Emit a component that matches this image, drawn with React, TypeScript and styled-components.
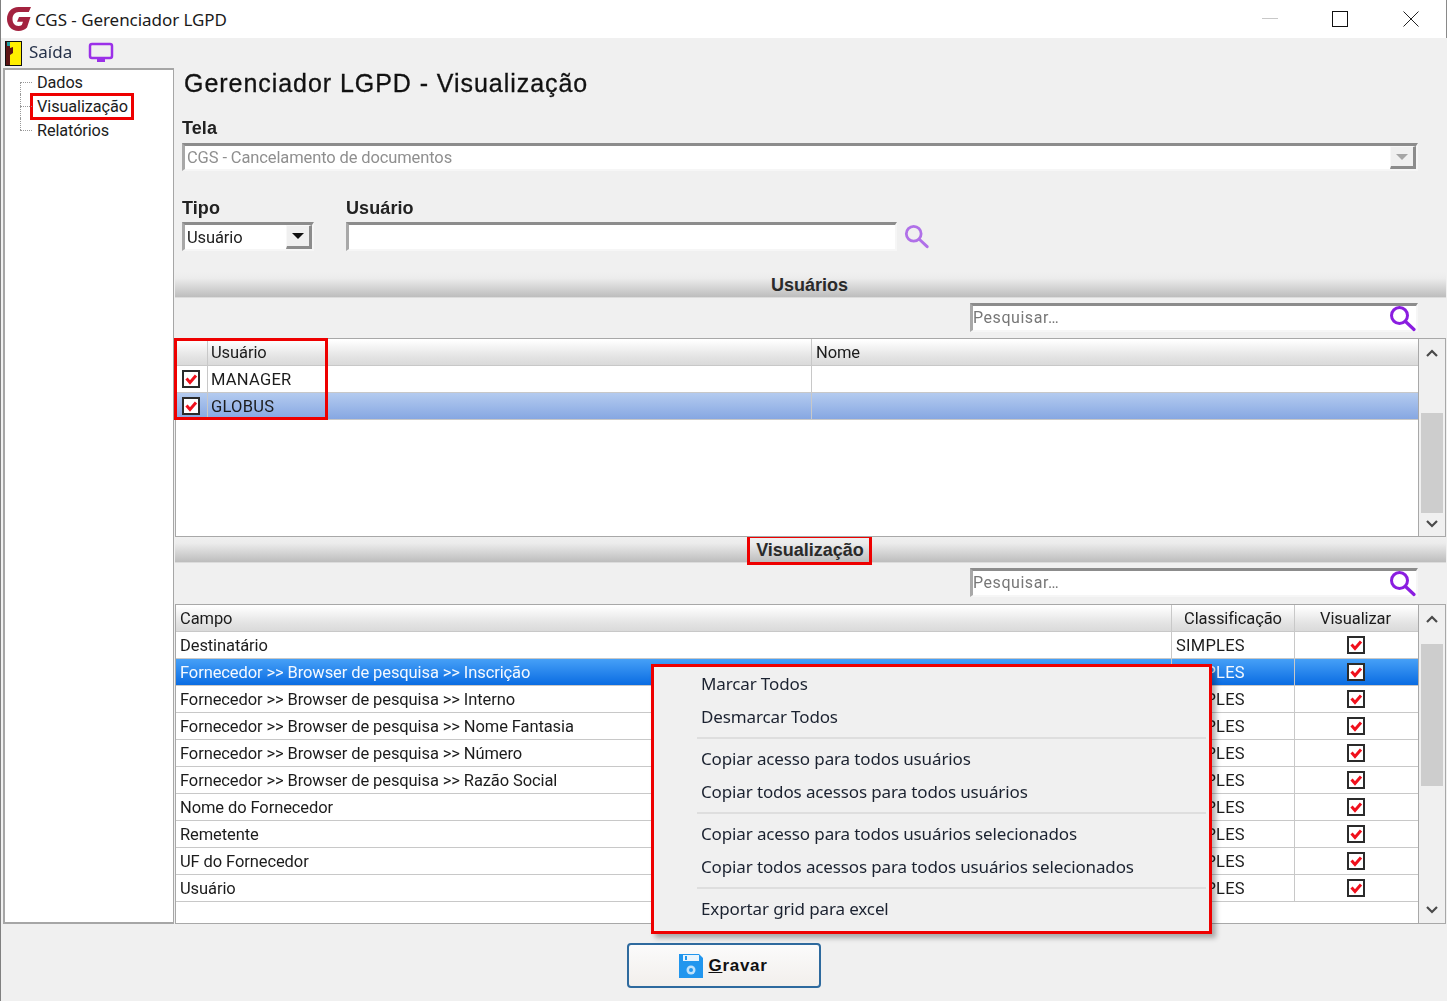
import React from "react";
import styled, { createGlobalStyle, css } from "styled-components";

const Global = createGlobalStyle`
  html, body { margin: 0; padding: 0; background: #f0f0f0; }
  body { font-family: Roboto, "Liberation Sans", sans-serif; color: #111; }
  * { box-sizing: border-box; }
`;

const soft = css`filter: blur(.3px);`;

const Page = styled.div`
  position: relative; width: 1447px; height: 1001px; overflow: hidden;
  display: flex; flex-direction: column; background: #f0f0f0; border-left: 1px solid #808080;
`;
const TitleBar = styled.div`
  height: 38px; background: #fff; display: flex; align-items: center;
  padding-left: 5px; border-right: 1px solid #8a8a8a;
`;
const TitleText = styled.span`
  font-family: "Noto Sans", sans-serif; font-size: 17px; margin-left: 3px; color: #1a1a1a; flex: 1; letter-spacing: -.05px;
`;
const WinButton = styled.span`
  width: 70.5px; height: 38px; display: flex; align-items: center; justify-content: center;
`;
const Toolbar = styled.div`
  height: 30px; display: flex; align-items: center; padding-left: 4px;
`;
const ToolText = styled.span`
  font-family: "Noto Sans", sans-serif; font-size: 17px; color: #26324a; margin: 0 16px 3px 7px; ${soft}
`;
const Body = styled.div`
  display: flex; height: 856px;
`;
const Sidebar = styled.div`
  width: 171px; margin-left: 2px; flex: none; background: #fff;
  border: 2px solid #a6a6a6; border-right-width: 1px; border-bottom-width: 2px;
`;
const TreeRow = styled.div`
  display: flex; height: 24px; margin-left: 15px; align-items: center;
`;
const Guide = styled.span<{ $first?: boolean; $last?: boolean }>`
  position: relative; width: 12px; height: 24px; flex: none;
  &::before {
    content: ""; position: absolute; left: 0; width: 0; border-left: 1px dotted #999;
    top: ${p => (p.$first ? "12px" : "0")}; bottom: ${p => (p.$last ? "12px" : "0")};
  }
  &::after {
    content: ""; position: absolute; left: 0; right: 0; top: 12px; border-top: 1px dotted #999;
  }
`;
const TreeLabel = styled.span<{ $marked?: boolean }>`
  font-size: 16.3px; letter-spacing: -.1px; line-height: 21px; color: #1c1c1c; padding: 0 3px 0 4px; margin-left: 1px;
  ${p => p.$marked ? "outline: 3px solid #ee0000;" : ""}
`;
const Main = styled.div`
  margin-left: 1px; width: 1271px; flex: none; display: flex; flex-direction: column;
`;
const Form = styled.div`
  padding-left: 7px; display: flex; flex-direction: column;
`;
const Heading = styled.h1`
  margin: 0 0 0 2px; height: 30px; font-size: 25px; line-height: 30px; font-weight: 400; color: #111; letter-spacing: .95px;
  font-family: "Liberation Sans", sans-serif; -webkit-text-stroke: .3px #111; ${soft}
`;
const FieldLabel = styled.div`
  font-family: "Liberation Sans", sans-serif; font-size: 18px; line-height: 22px; font-weight: 700; color: #222; height: 20px; letter-spacing: .1px; ${soft}
`;
const Recessed = styled.div<{ $w: number; $h: number }>`
  width: ${p => p.$w}px; height: ${p => p.$h}px; background: #fff; display: flex; align-items: center;
  border-style: solid; border-width: 3px 2px 2px 3px; border-color: #8c8c8c #f6f6f6 #f6f6f6 #a8a8a8;
`;
const ComboText = styled.span<{ $muted?: boolean }>`
  flex: 1; font-size: 16.5px; letter-spacing: -.12px; padding: 0 0 ${p => (p.$muted ? 1 : 0)}px 2px; color: ${p => (p.$muted ? "#8f8f8f" : "#222")}; ${soft}
`;
const DropButton = styled.span<{ $disabled?: boolean }>`
  width: 26px; align-self: stretch; display: flex; align-items: center; justify-content: center; background: #f0f0f0;
  border-style: solid; border-width: 1px 3px 3px 1px; border-color: #f8f8f8 #8c8c8c #8c8c8c #f8f8f8;
  &::after {
    content: ""; border-style: solid; border-width: 6px 6px 0 6px;
    border-color: ${p => (p.$disabled ? "#a6a6a6" : "#111")} transparent transparent transparent;
  }
`;
const TelaGroup = styled.div`
  margin-top: 19px; display: flex; flex-direction: column; gap: 6px;
`;
const FilterRow = styled.div`
  margin-top: 26px; margin-bottom: 21px; display: flex; gap: 32px;
`;
const FilterField = styled.div`
  display: flex; flex-direction: column; gap: 5px;
`;
const InputWrap = styled.div`
  display: flex; align-items: center; gap: 7px;
`;
const SectionBar = styled.div`
  height: 26px; flex: none; display: flex; align-items: center; justify-content: center;
  background: linear-gradient(#f0f0f0 0%, #ececec 25%, #bdbdbd 100%);
  border-bottom: 1px solid #dcdcdc; padding-right: 2px;
`;
const SectionTitle = styled.span<{ $marked?: boolean }>`
  font-family: "Liberation Sans", sans-serif; font-size: 18px; font-weight: 700; color: #2a2a2a; line-height: 24px;
  ${p => p.$marked ? "outline: 3px solid #ee0000; padding: 0 5px 0 6px;" : ""}
`;
const SearchRow = styled.div<{ $top: number; $bottom: number }>`
  display: flex; justify-content: flex-end; padding-right: 28px;
  margin-top: ${p => p.$top}px; margin-bottom: ${p => p.$bottom}px;
`;
const SearchHint = styled.span`
  flex: 1; font-size: 16px; color: #777; letter-spacing: .55px; padding-bottom: 2px; ${soft}
`;
const GridBox = styled.div<{ $h: number }>`
  position: relative; height: ${p => p.$h}px; width: 1271px; display: flex; flex: none;
  border: 1px solid #a8a8a8; background: #fff;
`;
const GridBody = styled.div`
  flex: 1; min-width: 0;
`;
const Row = styled.div<{ $cols: string; $tone?: "soft" | "strong" | "head" }>`
  display: grid; grid-template-columns: ${p => p.$cols}; height: 27px;
  border-bottom: 1px solid #c8c8c8;
  background: ${p => p.$tone === "soft" ? "linear-gradient(#b4cbef,#86a7e2)"
    : p.$tone === "strong" ? "linear-gradient(#46a0f7,#0a6ce2)"
    : p.$tone === "head" ? "linear-gradient(#ffffff 5%,#e3e3e3 70%,#dadada)" : "#fff"};
  color: ${p => (p.$tone === "strong" ? "#f4f9ff" : "#1c1c1c")};
`;
const Cell = styled.div<{ $center?: boolean; $pad?: number }>`
  display: flex; align-items: center; overflow: hidden; white-space: nowrap;
  justify-content: ${p => (p.$center ? "center" : "flex-start")};
  padding: 0 ${p => (p.$center ? 2 : 0)}px 0 ${p => p.$pad ?? 4}px; font-size: 16.5px; letter-spacing: -.1px;
  border-right: 1px solid #c8c8c8;
  &:last-child { border-right: 0; }
  ${soft}
`;
const Mono = styled.span`
  letter-spacing: .25px; font-size: 16.5px;
`;
const Scroll = styled.div`
  width: 27px; flex: none; background: #f0f0f0; border-left: 1px solid #a8a8a8; display: flex; flex-direction: column; align-items: center;
`;
const ScrollBtn = styled.div<{ $lift?: number }>`
  height: 27px; width: 100%; flex: none; display: flex; align-items: center; justify-content: center;
  padding-bottom: ${p => p.$lift ?? 0}px;
`;
const ScrollTrack = styled.div<{ $before: number; $size: number }>`
  flex: 1; width: 100%; padding: ${p => p.$before}px 2px 0 2px;
  &::before { content: ""; display: block; height: ${p => p.$size}px; background: #cdcdcd; }
`;
const RedFrame = styled.div`
  position: absolute; left: -2px; top: -1px; width: 154px; height: 82px; border: 3px solid #ee0000; pointer-events: none;
`;
const Footer = styled.div`
  flex: 1; display: flex; justify-content: center; padding: 19px 1px 0 0;
`;
const SaveButton = styled.button`
  width: 194px; height: 45px; border: 2px solid #2e6a9e; border-radius: 4px; display: flex; align-items: center; justify-content: center; gap: 5px;
  background: linear-gradient(#fbfbfb,#f2efec); font-family: "Liberation Sans", sans-serif; font-weight: 700; font-size: 17px; color: #111; letter-spacing: .7px; padding: 0;
`;
const Under = styled.span`
  text-decoration: underline;
`;
const Menu = styled.div`
  position: absolute; left: 650px; top: 664px; width: 561px; height: 270px; background: #f0f0f0;
  border: 3px solid #ee0000; box-shadow: 4px 4px 5px rgba(0,0,0,.3);
`;
const MenuItem = styled.div`
  height: 33px; display: flex; align-items: center; padding: 0 0 1px 47px;
  font-family: "Noto Sans", sans-serif; font-size: 17px; letter-spacing: -.13px; color: #1b2230; ${soft}
`;
const MenuSep = styled.div`
  height: 9px; margin-left: 43px; margin-right: 3px; display: flex; align-items: center;
  &::after { content: ""; flex: 1; height: 2px; background: #dedede; }
`;

const Logo = () => (
  <svg width="26" height="26" viewBox="0 0 26 26">
    <path d="M25 1H12.500C5.500 1 1 6.500 1 13s4.500 12 11.500 12c3.500 0 6.500-1.200 8.500-3.500L24.500 11H13l-2 4.800h6l-1.200 3.200c-.9.7-2 1-3.300 1-3.800 0-6-3-6-7s2.500-7 6.300-7h10z" fill="#a3223f" />
  </svg>
);
const Door = () => (
  <svg width="17" height="25" viewBox="0 0 17 25">
    <rect x="0.500" y="0.500" width="16" height="24" fill="#ffef00" stroke="#111" />
    <path d="M1 1h4v23H1z" fill="#5c1414" />
    <path d="M5 7l3-1v6l-3 2z" fill="#5c1414" />
    <rect x="2" y="1" width="3" height="4" fill="#20a0a0" />
  </svg>
);
const Monitor = () => (
  <svg width="26" height="22" viewBox="0 0 26 22">
    <rect x="2" y="2" width="22" height="14" rx="2" fill="none" stroke="#9b30e8" strokeWidth="2.500" />
    <rect x="9" y="17" width="8" height="3" fill="#9b30e8" />
  </svg>
);
const Lens = ({ size = 27, color = "#8a1de0" }: { size?: number; color?: string }) => (
  <svg width={size} height={size} viewBox="0 0 27 27">
    <circle cx="10.500" cy="10.500" r="8" fill="none" stroke={color} strokeWidth="3" />
    <path d="M16.500 16.500L25 24.500" stroke={color} strokeWidth="3.200" strokeLinecap="round" />
  </svg>
);
const Check = () => (
  <svg width="18" height="18" viewBox="0 0 18 18">
    <rect x="1" y="1" width="16" height="16" fill="#fff" stroke="#2b2b2b" strokeWidth="2" />
    <path d="M4.500 8.500L8 12.500L14 5.500" fill="none" stroke="#f0101c" strokeWidth="3" />
  </svg>
);
const Chevron = ({ up }: { up?: boolean }) => (
  <svg width="12" height="8" viewBox="0 0 12 8">
    <path d={up ? "M1 7L6 2L11 7" : "M1 1L6 6L11 1"} fill="none" stroke="#4a4a4a" strokeWidth="2.200" />
  </svg>
);
const Floppy = () => (
  <svg width="24" height="25" viewBox="0 0 24 25">
    <path d="M0 1h20l4 4v20H0z" fill="#2196ee" />
    <rect x="4" y="2" width="16" height="6" fill="#e8f4fd" />
    <rect x="6" y="3" width="2" height="4" fill="#2196ee" />
    <circle cx="12" cy="17" r="4.500" fill="#bfe2fb" />
    <circle cx="12" cy="17" r="2" fill="#2196ee" />
  </svg>
);

const usersCols = "32px 604px 1fr";
const fieldCols = "996px 123px 1fr";
const fields = [
  "Destinatário",
  "Fornecedor >> Browser de pesquisa >> Inscrição",
  "Fornecedor >> Browser de pesquisa >> Interno",
  "Fornecedor >> Browser de pesquisa >> Nome Fantasia",
  "Fornecedor >> Browser de pesquisa >> Número",
  "Fornecedor >> Browser de pesquisa >> Razão Social",
  "Nome do Fornecedor",
  "Remetente",
  "UF do Fornecedor",
  "Usuário",
];
const menu = [
  ["Marcar Todos", "Desmarcar Todos"],
  ["Copiar acesso para todos usuários", "Copiar todos acessos para todos usuários"],
  ["Copiar acesso para todos usuários selecionados", "Copiar todos acessos para todos usuários selecionados"],
  ["Exportar grid para excel"],
];

const Search = () => (
  <Recessed $w={448} $h={29}>
    <SearchHint>Pesquisar…</SearchHint>
    <Lens />
  </Recessed>
);

export default function App() {
  return (
    <Page>
      <Global />
      <TitleBar>
        <Logo />
        <TitleText>CGS - Gerenciador LGPD</TitleText>
        <WinButton><svg width="16" height="2"><rect width="16" height="1" fill="#c8c8c8" /></svg></WinButton>
        <WinButton><svg width="16" height="16"><rect x=".5" y=".5" width="15" height="15" fill="none" stroke="#111" /></svg></WinButton>
        <WinButton><svg width="16" height="16"><path d="M.5.500L15.500 15.500M15.500.500L.5 15.500" stroke="#222" /></svg></WinButton>
      </TitleBar>
      <Toolbar>
        <Door />
        <ToolText>Saída</ToolText>
        <Monitor />
      </Toolbar>
      <Body>
        <Sidebar>
          <TreeRow><Guide $first /><TreeLabel>Dados</TreeLabel></TreeRow>
          <TreeRow><Guide /><TreeLabel $marked>Visualização</TreeLabel></TreeRow>
          <TreeRow><Guide $last /><TreeLabel>Relatórios</TreeLabel></TreeRow>
        </Sidebar>
        <Main>
          <Form>
            <Heading>Gerenciador LGPD - Visualização</Heading>
            <TelaGroup>
              <FieldLabel>Tela</FieldLabel>
              <Recessed $w={1236} $h={28}>
                <ComboText $muted>CGS - Cancelamento de documentos</ComboText>
                <DropButton $disabled />
              </Recessed>
            </TelaGroup>
            <FilterRow>
              <FilterField>
                <FieldLabel>Tipo</FieldLabel>
                <Recessed $w={132} $h={29}>
                  <ComboText>Usuário</ComboText>
                  <DropButton />
                </Recessed>
              </FilterField>
              <FilterField>
                <FieldLabel>Usuário</FieldLabel>
                <InputWrap>
                  <Recessed $w={551} $h={29} />
                  <Lens size={25} color="#b070e8" />
                </InputWrap>
              </FilterField>
            </FilterRow>
          </Form>

          <SectionBar><SectionTitle>Usuários</SectionTitle></SectionBar>
          <SearchRow $top={5} $bottom={6}><Search /></SearchRow>
          <GridBox $h={199}>
            <GridBody>
              <Row $cols={usersCols} $tone="head">
                <Cell /><Cell $pad={3}>Usuário</Cell><Cell>Nome</Cell>
              </Row>
              <Row $cols={usersCols}>
                <Cell $center $pad={0}><Check /></Cell><Cell $pad={3}><Mono>MANAGER</Mono></Cell><Cell />
              </Row>
              <Row $cols={usersCols} $tone="soft">
                <Cell $center $pad={0}><Check /></Cell><Cell $pad={3}><Mono>GLOBUS</Mono></Cell><Cell />
              </Row>
            </GridBody>
            <Scroll>
              <ScrollBtn><Chevron up /></ScrollBtn>
              <ScrollTrack $before={47} $size={100} />
              <ScrollBtn $lift={6}><Chevron /></ScrollBtn>
            </Scroll>
            <RedFrame />
          </GridBox>
          <SectionBar><SectionTitle $marked>Visualização</SectionTitle></SectionBar>
          <SearchRow $top={5} $bottom={7}><Search /></SearchRow>
          <GridBox $h={320}>
            <GridBody>
              <Row $cols={fieldCols} $tone="head">
                <Cell>Campo</Cell><Cell $center $pad={2}>Classificação</Cell><Cell $center $pad={0}>Visualizar</Cell>
              </Row>
              {fields.map((f, i) => (
                <Row key={f} $cols={fieldCols} $tone={i === 1 ? "strong" : undefined}>
                  <Cell>{f}</Cell>
                  <Cell><Mono>SIMPLES</Mono></Cell>
                  <Cell $center $pad={0}><Check /></Cell>
                </Row>
              ))}
            </GridBody>
            <Scroll>
              <ScrollBtn><Chevron up /></ScrollBtn>
              <ScrollTrack $before={12} $size={142} />
              <ScrollBtn><Chevron /></ScrollBtn>
            </Scroll>
          </GridBox>
        </Main>
      </Body>
      <Footer>
        <SaveButton><Floppy /><span><Under>G</Under>ravar</span></SaveButton>
      </Footer>
      <Menu>
        {menu.map((group, g) => (
          <React.Fragment key={g}>
            {g > 0 && <MenuSep />}
            {group.map(m => <MenuItem key={m}>{m}</MenuItem>)}
          </React.Fragment>
        ))}
      </Menu>
    </Page>
  );
}
